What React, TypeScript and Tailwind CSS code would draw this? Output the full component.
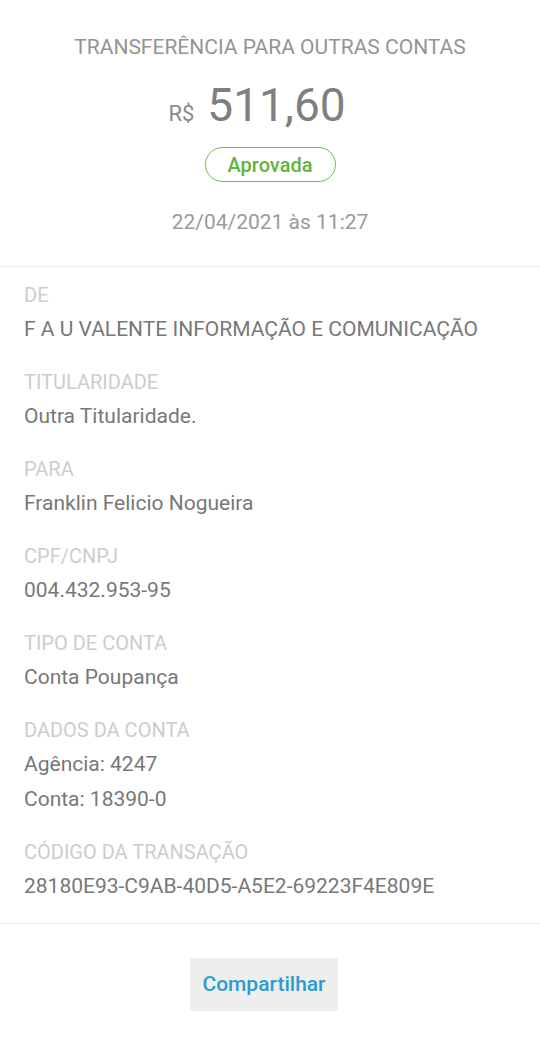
import React from "react";

const sections: { label: string; values: string[] }[] = [
  { label: "DE", values: ["F A U VALENTE INFORMAÇÃO E COMUNICAÇÃO"] },
  { label: "TITULARIDADE", values: ["Outra Titularidade."] },
  { label: "PARA", values: ["Franklin Felicio Nogueira"] },
  { label: "CPF/CNPJ", values: ["004.432.953-95"] },
  { label: "TIPO DE CONTA", values: ["Conta Poupança"] },
  { label: "DADOS DA CONTA", values: ["Agência: 4247", "Conta: 18390-0"] },
  { label: "CÓDIGO DA TRANSAÇÃO", values: ["28180E93-C9AB-40D5-A5E2-69223F4E809E"] },
];

export default function App() {
  return (
    <div
      className="w-[540px] h-[1044px] bg-white overflow-hidden"
      style={{ fontFamily: "Roboto, 'Noto Sans', sans-serif" }}
    >
      <div className="flex flex-col items-center pt-[35px] pb-[32px]">
        <div className="text-[21px] leading-[24px] text-[#949494] whitespace-nowrap">
          TRANSFERÊNCIA PARA OUTRAS CONTAS
        </div>
        <div className="flex items-baseline mt-[20px] h-[52px] pr-[26px]">
          <span className="text-[22px] text-[#8a8a8a] mr-[13px]">R$</span>
          <span className="text-[46px] leading-[52px] text-[#7f7f7f]">511,60</span>
        </div>
        <div className="mt-[16px] h-[35px] w-[131px] rounded-full border border-[#6dbf4b] flex items-center justify-center text-[20px] font-medium text-[#5db53b]">
          Aprovada
        </div>
        <div className="mt-[28px] text-[21px] leading-[24px] text-[#9b9b9b]">
          22/04/2021 às 11:27
        </div>
      </div>
      <div className="h-px bg-[#ececec]" />
      <div className="flex flex-col gap-[18px] px-[24px] pt-[11px] pb-[19px]">
        {sections.map((s) => (
          <div key={s.label} className="flex flex-col">
            <div className="text-[20px] leading-[34px] text-[#cdcdcd]">{s.label}</div>
            {s.values.map((v) => (
              <div key={v} className="text-[21px] leading-[35px] text-[#787878] whitespace-nowrap">
                {v}
              </div>
            ))}
          </div>
        ))}
      </div>
      <div className="h-px bg-[#ececec]" />
      <div className="flex justify-center pt-[34px] pr-[12px]">
        <div className="w-[148px] h-[53px] bg-[#eeeeee] rounded-[2px] flex items-center justify-center text-[21px] font-medium text-[#2b9ccf]">
          Compartilhar
        </div>
      </div>
    </div>
  );
}
